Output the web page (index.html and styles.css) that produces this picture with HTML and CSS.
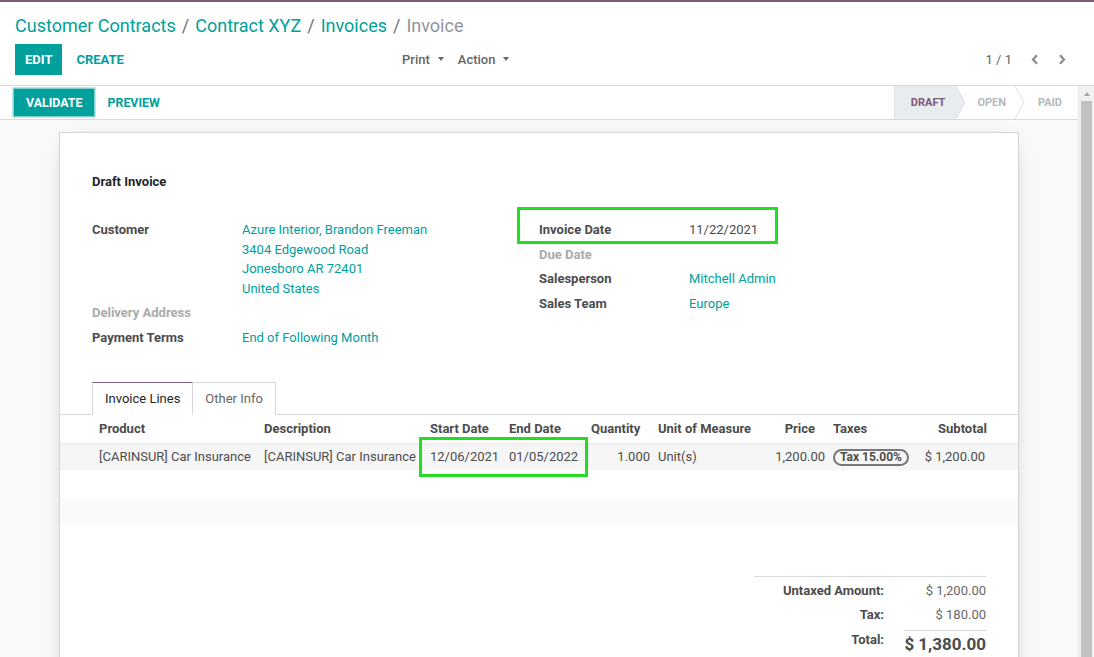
FILE: index.html
```html
<!DOCTYPE html>
<html lang="en">
<head>
<meta charset="utf-8">
<title>Invoice</title>
<link rel="stylesheet" href="styles.css">
</head>
<body>
<div class="app">
  <header class="control-panel">
    <ol class="breadcrumb">
      <li class="crumb link">Customer Contracts</li>
      <li class="sep">/</li>
      <li class="crumb link">Contract XYZ</li>
      <li class="sep">/</li>
      <li class="crumb link">Invoices</li>
      <li class="sep">/</li>
      <li class="crumb active">Invoice</li>
    </ol>
    <div class="cp-row">
      <div class="cp-buttons">
        <button class="btn btn-primary">Edit</button>
        <button class="btn btn-link">Create</button>
      </div>
      <div class="cp-sidebar">
        <button class="btn-drop">Print<span class="caret"></span></button>
        <button class="btn-drop">Action<span class="caret"></span></button>
      </div>
      <div class="pager">
        <span class="pager-value">1 / 1</span>
        <button class="pager-btn"><svg width="8" height="11" viewBox="0 0 8 11"><polyline points="6,1.2 2,5.5 6,9.8" fill="none" stroke="#8c8c8c" stroke-width="2.3"/></svg></button>
        <button class="pager-btn"><svg width="8" height="11" viewBox="0 0 8 11"><polyline points="2,1.2 6,5.5 2,9.8" fill="none" stroke="#8c8c8c" stroke-width="2.3"/></svg></button>
      </div>
    </div>
  </header>

  <div class="main">
    <div class="content">
      <div class="statusbar">
        <div class="sb-buttons">
          <button class="btn btn-primary btn-sm focused">Validate</button>
          <button class="btn btn-link btn-sm">Preview</button>
        </div>
        <div class="status">
          <span class="stage current">Draft</span>
          <svg class="chev" width="10" height="33" viewBox="0 0 10 33"><polygon points="0,0 9,16.5 0,33" fill="#e9ecef"/><polyline points="0,0 9,16.5 0,33" fill="none" stroke="#dcdfe3" stroke-width="1"/></svg>
          <span class="stage open">Open</span>
          <svg class="chev" width="10" height="33" viewBox="0 0 10 33"><polyline points="0,0 9,16.5 0,33" fill="none" stroke="#dcdfe3" stroke-width="1"/></svg>
          <span class="stage paid">Paid</span>
        </div>
      </div>

      <div class="sheet-bg">
        <div class="sheet">
          <h2 class="title">Draft Invoice</h2>

          <div class="groups">
            <table class="group">
              <tr>
                <td class="label">Customer</td>
                <td class="value link">Azure Interior, Brandon Freeman<br>3404 Edgewood Road<br>Jonesboro AR 72401<br>United States</td>
              </tr>
              <tr>
                <td class="label muted">Delivery Address</td>
                <td class="value"></td>
              </tr>
              <tr>
                <td class="label">Payment Terms</td>
                <td class="value link">End of Following Month</td>
              </tr>
            </table>
            <table class="group">
              <tr>
                <td class="label">Invoice Date</td>
                <td class="value">11/22/2021</td>
              </tr>
              <tr>
                <td class="label muted">Due Date</td>
                <td class="value"></td>
              </tr>
              <tr>
                <td class="label">Salesperson</td>
                <td class="value link">Mitchell Admin</td>
              </tr>
              <tr>
                <td class="label">Sales Team</td>
                <td class="value link">Europe</td>
              </tr>
            </table>
          </div>

          <div class="notebook">
            <ul class="tabs">
              <li class="tab active">Invoice Lines</li>
              <li class="tab">Other Info</li>
            </ul>
            <table class="lines">
              <colgroup>
                <col class="c-product"><col class="c-desc"><col class="c-start"><col class="c-end"><col class="c-qty"><col class="c-uom"><col class="c-price"><col class="c-taxes"><col class="c-sub">
              </colgroup>
              <thead>
                <tr>
                  <th class="first">Product</th>
                  <th>Description</th>
                  <th>Start Date</th>
                  <th>End Date</th>
                  <th class="num">Quantity</th>
                  <th>Unit of Measure</th>
                  <th class="num">Price</th>
                  <th>Taxes</th>
                  <th class="num last">Subtotal</th>
                </tr>
              </thead>
              <tbody>
                <tr class="odd top">
                  <td class="first">[CARINSUR] Car Insurance</td>
                  <td>[CARINSUR] Car Insurance</td>
                  <td>12/06/2021</td>
                  <td>01/05/2022</td>
                  <td class="num">1.000</td>
                  <td>Unit(s)</td>
                  <td class="num">1,200.00</td>
                  <td><span class="badge">Tax 15.00%</span></td>
                  <td class="num last">$ 1,200.00</td>
                </tr>
                <tr class="empty"><td colspan="9"></td></tr>
                <tr class="empty odd2"><td colspan="9"></td></tr>
              </tbody>
            </table>
          </div>

          <div class="totals-wrap">
            <table class="totals">
              <colgroup>
                <col class="t-label-col"><col class="t-value-col">
              </colgroup>
              <tr class="t-first">
                <th>Untaxed Amount:</th>
                <td>$ 1,200.00</td>
              </tr>
              <tr class="t-second">
                <th>Tax:</th>
                <td>$ 180.00</td>
              </tr>
              <tr class="t-total">
                <th>Total:</th>
                <td class="grand">$ 1,380.00</td>
              </tr>
            </table>
          </div>

          <div class="highlight hl-date"></div>
          <div class="highlight hl-lines"></div>
        </div>
      </div>
    </div>
    <div class="scrollbar">
      <span class="sb-up"></span>
      <span class="sb-thumb"></span>
    </div>
  </div>
</div>
</body>
</html>
```

FILE: styles.css
```css
* { box-sizing: border-box; }

html, body {
  margin: 0;
  padding: 0;
  height: 657px;
  overflow: hidden;
  font-family: Roboto, "Noto Sans", "Liberation Sans", sans-serif;
  font-size: 13px;
  line-height: 19.5px;
  color: #4c4c4c;
  background: #fff;
}

button {
  font-family: inherit;
  border: none;
  background: none;
  padding: 0;
  margin: 0;
  cursor: pointer;
}

.app {
  height: 657px;
  display: flex;
  flex-direction: column;
  overflow: hidden;
}

/* ---------- control panel ---------- */
.control-panel {
  border-top: 2px solid #7c5a78;
  border-bottom: 1px solid #d9d9d9;
  padding: 9px 19px 10px 15px;
  background: #fff;
}

.breadcrumb {
  list-style: none;
  margin: 0;
  padding: 0;
  display: flex;
  font-size: 18px;
  line-height: 30px;
  height: 30px;
}

.crumb.link { color: #00a09d; }
.crumb.active { color: #8f959b; }
.sep {
  color: #6c757d;
  padding: 0 6px;
}

.cp-row {
  margin-top: 3px;
  display: grid;
  grid-template-columns: 380px 1fr auto;
  align-items: center;
  height: 31px;
}

.cp-buttons { display: flex; }

.btn {
  height: 31px;
  padding: 0 10px;
  font-size: 13px;
  font-weight: 700;
  text-transform: uppercase;
  display: inline-flex;
  align-items: center;
}

.btn-primary {
  background: #00a09d;
  color: #fff;
}

.btn-link {
  color: #00a09d;
  margin-left: 4px;
}

.cp-sidebar { display: flex; }

.btn-drop {
  height: 31px;
  padding: 0 7px;
  font-size: 13px;
  font-weight: 500;
  color: #666;
  display: inline-flex;
  align-items: center;
}

.caret {
  display: inline-block;
  margin-left: 8px;
  width: 0;
  height: 0;
  border-top: 4px solid #666;
  border-left: 3.5px solid transparent;
  border-right: 3.5px solid transparent;
  position: relative;
  top: -1px;
}

.pager {
  display: flex;
  align-items: center;
}

.pager-value {
  color: #666;
  margin-right: 9px;
}

.pager-btn {
  width: 27px;
  height: 31px;
  display: inline-flex;
  align-items: center;
  justify-content: center;
}

/* ---------- main ---------- */
.main {
  flex: 1;
  display: flex;
  min-height: 0;
  overflow: hidden;
}

.content {
  flex: 1;
  min-width: 0;
  display: flex;
  flex-direction: column;
  background: #f9f9f9;
  overflow: hidden;
}

.scrollbar {
  width: 16px;
  background: #f1f1f1;
  border-left: 1px solid #e8e8e8;
  display: flex;
  flex-direction: column;
  align-items: center;
}

.sb-up {
  margin-top: 6px;
  width: 0;
  height: 0;
  border-bottom: 4px solid #a3a3a3;
  border-left: 3.5px solid transparent;
  border-right: 3.5px solid transparent;
}

.sb-thumb {
  margin-top: 5px;
  width: 11px;
  flex: 1;
  background: #c1c1c1;
}

/* ---------- statusbar ---------- */
.statusbar {
  height: 34px;
  flex: none;
  background: #fff;
  border-bottom: 1px solid #d9d9d9;
  display: flex;
  justify-content: space-between;
  align-items: stretch;
  padding-left: 14px;
}

.sb-buttons {
  display: flex;
  align-items: center;
}

.btn-sm {
  height: 27px;
  padding: 0 12px;
  font-size: 12.4px;
}

.btn-sm.btn-link { margin-left: 1px; }

.focused {
  box-shadow: 0 0 0 1.5px #84d2cf;
}

.status {
  display: flex;
  align-items: stretch;
  height: 33px;
}

.stage {
  font-size: 11px;
  font-weight: 700;
  text-transform: uppercase;
  display: flex;
  align-items: center;
  color: #b3b8bd;
}

.stage.current {
  background: #e9ecef;
  color: #7c5a78;
  padding: 0 11px 0 16px;
  border-left: 1px solid #dfe2e6;
}

.stage.open { padding: 0 9px 0 11px; }
.stage.paid { padding: 0 16px 0 13px; }

.chev { display: block; flex: none; }

/* ---------- sheet ---------- */
.sheet-bg {
  flex: 1;
  padding-top: 12px;
  min-height: 0;
}

.sheet {
  position: relative;
  width: 960px;
  margin: 0 auto;
  height: 620px;
  background: #fff;
  border: 1px solid #d2d4d8;
  box-shadow: 0 5px 20px -12px rgba(0, 0, 0, 0.5);
  padding: 39px 32px 0;
}

.title {
  margin: 0 0 26px;
  font-size: 13px;
  line-height: 19.5px;
  font-weight: 700;
  color: #212529;
}

.groups {
  display: grid;
  grid-template-columns: 447px 447px;
  align-items: start;
}

.group {
  border-collapse: collapse;
  width: 100%;
}

.group td {
  padding: 2.5px 0;
  vertical-align: top;
  height: 24.5px;
}

.group .label {
  width: 150px;
  font-weight: 700;
  color: #4c4c4c;
}

.group .label.muted { color: #aaa; }

.link { color: #00a09d; }

/* ---------- notebook ---------- */
.notebook {
  margin: 32px -32px 0;
}

.tabs {
  list-style: none;
  margin: 0;
  padding: 0 0 0 32px;
  display: flex;
  border-bottom: 1px solid #d8d8d8;
}

.tab {
  border: 1px solid #d8d8d8;
  border-bottom: none;
  padding: 6px 12px 5px;
  line-height: 20px;
  color: #666;
  background: #fff;
  margin-bottom: -1px;
  height: 33px;
}

.tab + .tab { margin-left: -1px; }

.tab.active {
  color: #212529;
  border-top-color: #7c6178;
  position: relative;
  z-index: 1;
}

.lines {
  width: 958px;
  border-collapse: collapse;
  table-layout: fixed;
}

.c-product { width: 200px; }
.c-desc { width: 166px; }
.c-start { width: 79px; }
.c-end { width: 82px; }
.c-qty { width: 67px; }
.c-uom { width: 116px; }
.c-price { width: 59px; }
.c-taxes { width: 82px; }
.c-sub { width: 107px; }

.lines th,
.lines td {
  padding: 0 4px;
  text-align: left;
  white-space: nowrap;
  overflow: hidden;
}

.lines th {
  height: 28px;
  font-weight: 700;
  color: #4c4c4c;
}

.lines td { height: 27px; padding-top: 1px; }

.lines .first { padding-left: 39px; }
.lines .num { text-align: right; }
.lines th.num { padding-right: 14px; }
.lines th.num.last { padding-right: 31px; }
.lines td.last { padding-right: 33px; }

.lines tr.odd td { background: #f6f6f6; }
.lines tr.top td { box-shadow: inset 0 3px 3px -2px rgba(0, 0, 0, 0.06); }
.lines tr.odd2 td { background: #fafafa; }

.badge {
  display: inline-block;
  border: 2px solid #777;
  border-radius: 10px;
  padding: 0 5px;
  font-size: 12px;
  font-weight: 700;
  line-height: 13px;
  color: #4c4c4c;
}

/* ---------- totals ---------- */
.totals-wrap {
  display: flex;
  justify-content: flex-end;
  margin-top: 52px;
}

.totals {
  width: 232px;
  border-collapse: collapse;
  border-top: 1px solid #d8d8d8;
  table-layout: fixed;
}

.t-label-col { width: 150px; }
.t-value-col { width: 82px; }

.totals th {
  padding: 2px 20px 2px 0;
  text-align: right;
  font-weight: 700;
  color: #4c4c4c;
  vertical-align: top;
  white-space: nowrap;
}

.totals td {
  padding: 2px 0;
  text-align: right;
  color: #666;
  vertical-align: top;
  white-space: nowrap;
}

.totals .t-first th,
.totals .t-first td { padding-top: 4px; }

.totals .t-second th,
.totals .t-second td { padding-top: 3px; padding-bottom: 5px; }

.totals .t-total th {
  padding: 1px 20px 0 0;
  line-height: 18px;
}

.totals td.grand {
  padding: 1px 0 0;
  border-top: 1px solid #d8d8d8;
  font-size: 17px;
  line-height: 24px;
  font-weight: 700;
  color: #4c4c4c;
}

/* ---------- annotation boxes ---------- */
.highlight {
  position: absolute;
  border: 3px solid #22dd22;
  pointer-events: none;
}

.hl-date {
  left: 457px;
  top: 74px;
  width: 261px;
  height: 37px;
}

.hl-lines {
  left: 359px;
  top: 304px;
  width: 169px;
  height: 40px;
}
```
